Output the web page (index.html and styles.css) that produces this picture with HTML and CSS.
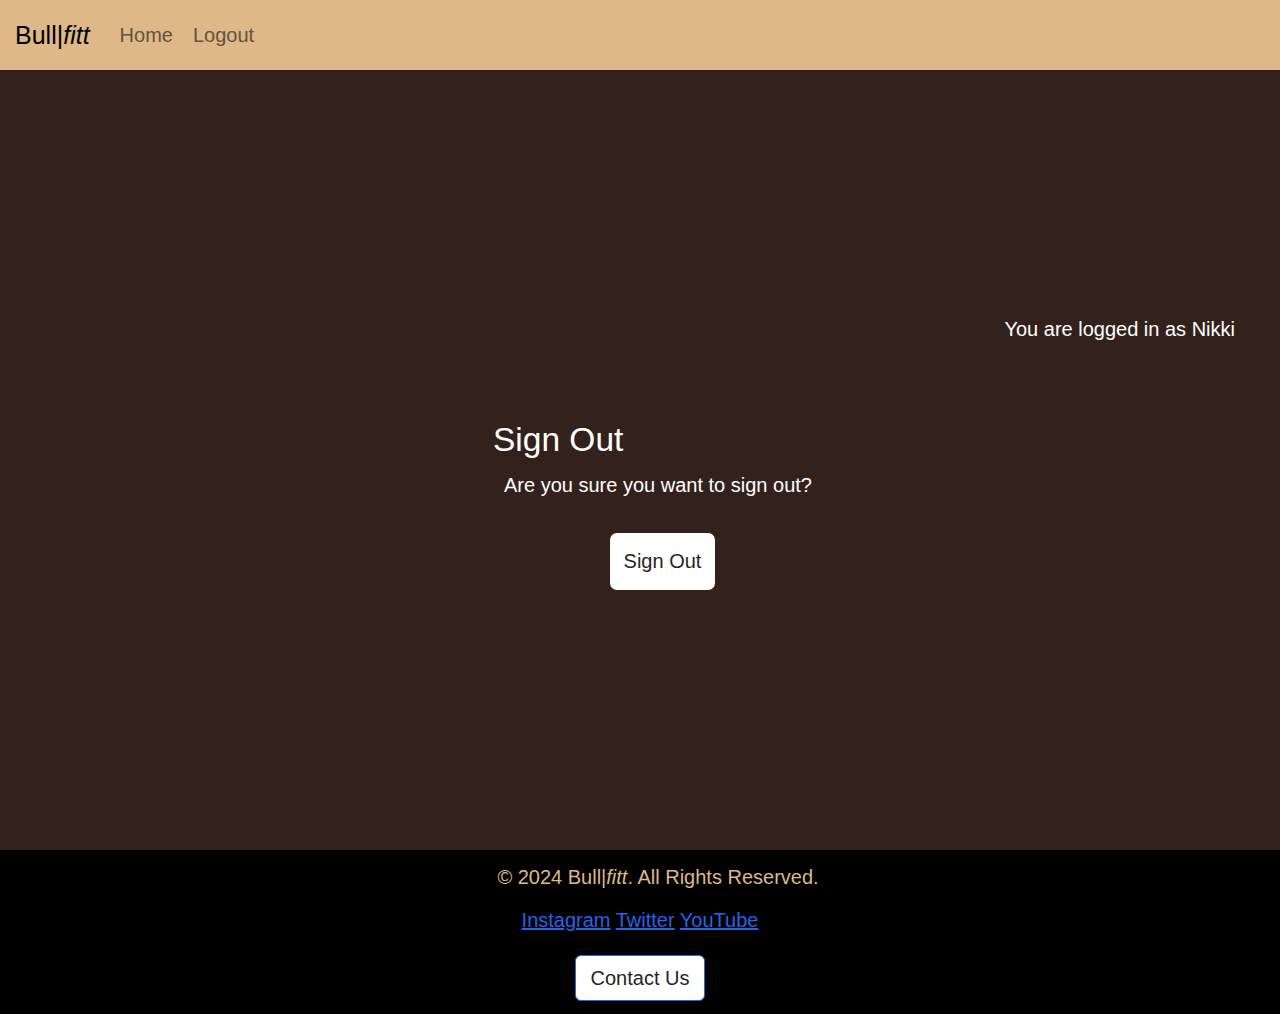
FILE: index.html
```html
<!DOCTYPE html>
<html lang="en">
<head>
<meta charset="utf-8">
<title>Bull|fitt - Sign Out</title>
<link rel="stylesheet" href="styles.css">
</head>
<body>
<nav class="navbar">
  <a class="brand" href="#">Bull|<em>fitt</em></a>
  <a class="nav-link" href="#">Home</a>
  <a class="nav-link" href="#">Logout</a>
</nav>
<main class="main">
  <div class="status-row">
    <p class="status">You are logged in as Nikki</p>
  </div>
  <section class="signout">
    <h2 class="signout-title">Sign Out</h2>
    <p class="signout-text">Are you sure you want to sign out?</p>
    <div class="signout-actions">
      <button class="btn-signout" type="button">Sign Out</button>
    </div>
  </section>
</main>
<footer class="footer">
  <p class="copyright">© 2024 Bull|<em>fitt</em>. All Rights Reserved.</p>
  <p class="social"><a href="#">Instagram</a> <a href="#">Twitter</a> <a href="#">YouTube</a></p>
  <button class="btn-contact" type="button">Contact Us</button>
</footer>
</body>
</html>
```

FILE: styles.css
```css
* { box-sizing: border-box; }
html, body { margin: 0; padding: 0; }
body {
  font-family: "Liberation Sans", Arial, sans-serif;
  font-size: 20px;
  line-height: 30px;
  background: #33221b;
  color: #fff;
}
.navbar {
  height: 70px;
  background: #deb887;
  display: flex;
  align-items: center;
  padding-left: 15px;
}
.brand {
  font-size: 25px;
  color: #000;
  text-decoration: none;
  margin-right: 20px;
}
.brand em { font-style: italic; }
.nav-link {
  color: #64533d;
  text-decoration: none;
  font-size: 20px;
  padding: 0 10px;
}
.main {
  height: 780px;
  background: #33221b;
  display: flex;
  flex-direction: column;
}
.status-row {
  display: flex;
  justify-content: flex-end;
  padding: 244px 45px 0 0;
}
.status { margin: 0; }
.signout {
  width: 330px;
  margin: 76px 0 0 493px;
}
.signout-title {
  font-size: 33.5px;
  font-weight: 500;
  line-height: 40px;
  margin: 0 0 10px;
}
.signout-text {
  margin: 0;
  text-align: center;
}
.signout-actions {
  display: flex;
  justify-content: center;
  padding-left: 9px;
  margin-top: 33px;
}
.btn-signout {
  font-family: inherit;
  font-size: 20px;
  line-height: 30px;
  background: #fff;
  color: #2b2420;
  border: 0;
  border-radius: 7px;
  padding: 13px 13.5px 14px;
}
.footer {
  height: 164px;
  background: #000;
  display: flex;
  flex-direction: column;
  align-items: center;
  padding-top: 12px;
}
.copyright {
  margin: 0;
  color: #deb887;
  padding-left: 36px;
}
.copyright em { font-style: italic; }
.social { margin: 13px 0 0; }
.social a { color: #2563e8; text-decoration: underline; }
.btn-contact {
  margin-top: 20px;
  font-family: inherit;
  font-size: 20px;
  line-height: 30px;
  background: #fff;
  color: #212529;
  border: 1px solid #2563e8;
  border-radius: 6px;
  padding: 7px 14.5px;
}
```
